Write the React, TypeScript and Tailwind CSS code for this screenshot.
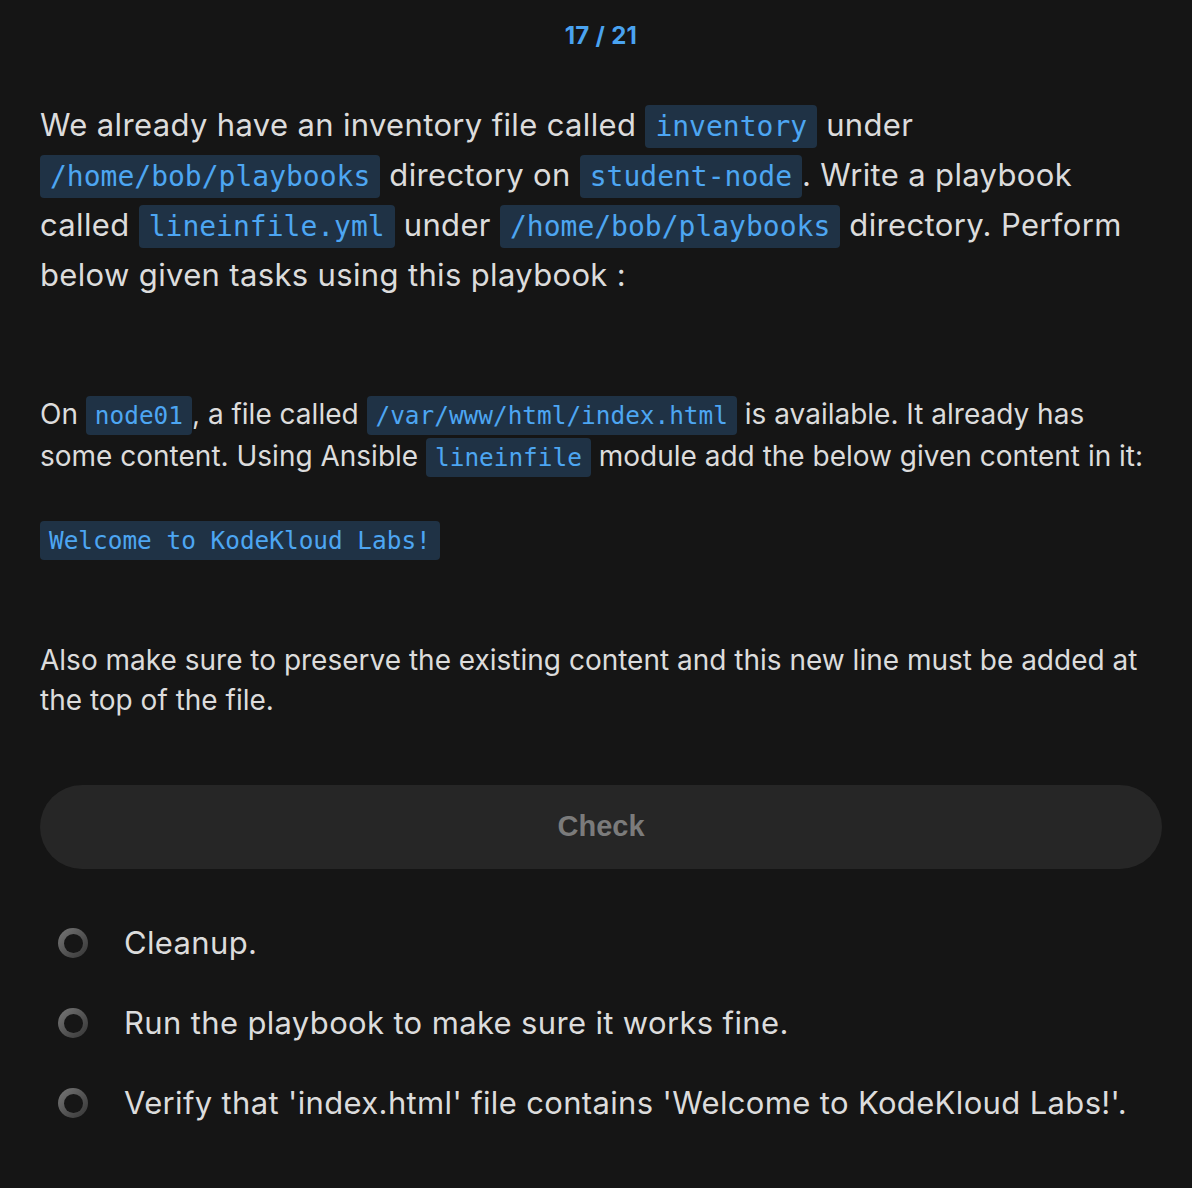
import React from "react";

const C1 = ({ children }: { children: React.ReactNode }) => (
  <code className="bg-[#1f3245] text-[#4da6f2] rounded-[4px] px-[10px] py-[5px] text-[28px] leading-none tracking-normal [font-family:'DejaVu_Sans_Mono',monospace]">
    {children}
  </code>
);

const C2 = ({ children }: { children: React.ReactNode }) => (
  <code className="bg-[#1f3245] text-[#4da6f2] rounded-[4px] px-[9px] py-[5px] text-[24.4px] leading-none tracking-normal [font-family:'DejaVu_Sans_Mono',monospace]">
    {children}
  </code>
);

const Radio = () => (
  <span className="w-[30px] h-[30px] rounded-full shrink-0 bg-gradient-to-br from-[#787878] to-[#363636] flex items-center justify-center">
    <span className="w-[19px] h-[19px] rounded-full bg-[#161616]" />
  </span>
);

export default function App() {
  return (
    <div className="min-h-[1188px] w-full bg-[#151515] text-[#dcdcdc] [font-family:Inter,'Noto_Sans',sans-serif] pl-[40px] pr-[30px] pt-[20px] pb-[40px]">
      <div className="text-center text-[#4aa3f0] font-bold text-[24px] leading-[32px] tracking-[0.3px]">17 / 21</div>

      <p className="mt-[48px] mr-[10px] text-[31px] leading-[50px] tracking-[0.35px]">
        We already have an inventory file called <C1>inventory</C1> under <C1>/home/bob/playbooks</C1> directory on{" "}
        <C1>student-node</C1>. Write a playbook called <C1>lineinfile.yml</C1> under <C1>/home/bob/playbooks</C1>{" "}
        directory. Perform below given tasks using this playbook :
      </p>

      <p className="mt-[93px] mr-[10px] text-[28px] leading-[42px]">
        On <C2>node01</C2>, a file called <C2>/var/www/html/index.html</C2> is available. It already has some content.
        Using Ansible <C2>lineinfile</C2> module add the below given content in it:
      </p>

      <p className="mt-[43px] text-[28px] leading-[38px]">
        <C2>Welcome to KodeKloud Labs!</C2>
      </p>

      <p className="mt-[82px] mr-[10px] text-[28px] leading-[40px]">
        Also make sure to preserve the existing content and this new line must be added at the top of the file.
      </p>

      <button className="mt-[65px] w-full h-[84px] rounded-full bg-[#262626] text-[#7b7b7b] font-bold text-[29px] [font-family:'Liberation_Sans',Arial,sans-serif]">
        Check
      </button>

      <div className="mt-[54px] flex flex-col gap-[40px]">
        {[
          "Cleanup.",
          "Run the playbook to make sure it works fine.",
          "Verify that 'index.html' file contains 'Welcome to KodeKloud Labs!'.",
        ].map((t) => (
          <div key={t} className="flex items-center gap-[36px] pl-[18px] h-[40px] text-[31px] leading-[40px] tracking-[0.35px]">
            <Radio />
            <span>{t}</span>
          </div>
        ))}
      </div>
    </div>
  );
}
